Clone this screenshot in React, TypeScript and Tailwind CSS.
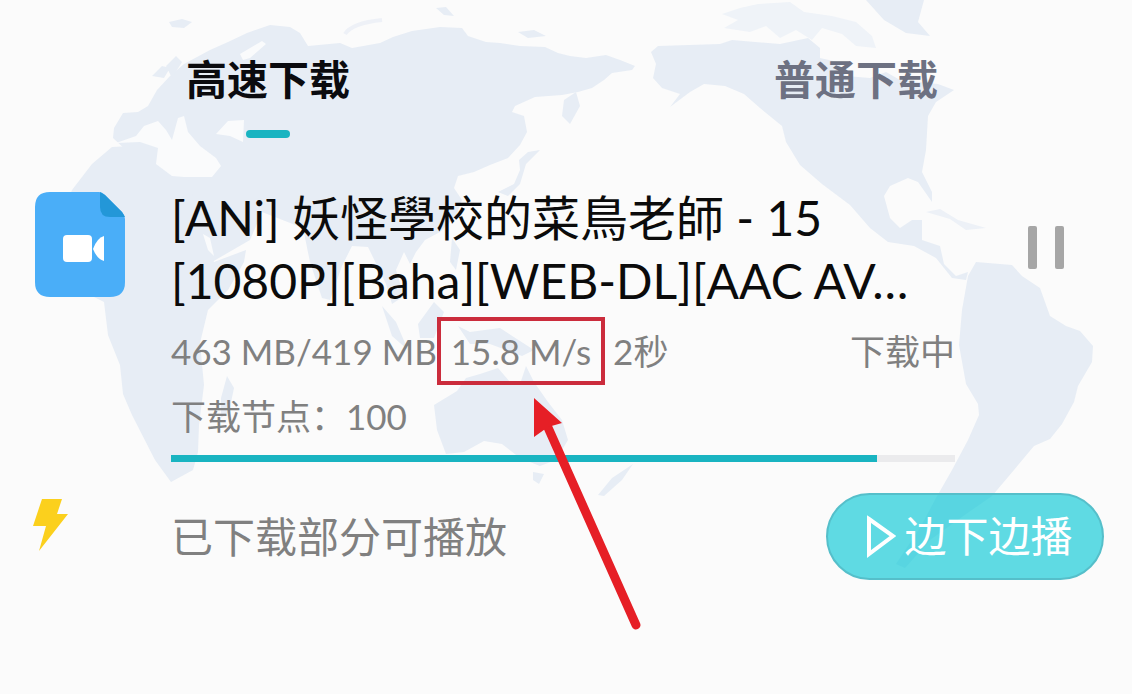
import { useState } from "react";
import clsx from "clsx";

const tabs = ["高速下载", "普通下载"];

const WorldMap: React.FC = () => (
  <svg
    className="absolute inset-x-0 top-0 w-full"
    viewBox="0 0 1132 694"
    fill="#e7edf5"
    aria-hidden="true"
  >
    {/* Eurasia */}
    <path d="M113 138 L114 128 L123 113 L138 112 L148 106 L157 90 L170 76 L184 64 L210 50 L228 42 L247 33 L270 25 L290 27 L300 33 L308 46 L340 43 L352 48 L380 43 L393 37 L412 31 L440 27 L462 28 L468 36 L486 42 L500 43 L520 46 L545 47 L558 53 L570 56 L586 58 L606 55 L620 60 L635 66 L632 70 L612 73 L604 80 L592 88 L578 92 L562 95 L535 97 L515 106 L512 112 L524 116 L527 132 L520 145 L508 158 L490 165 L474 172 L458 176 L454 188 L462 200 L456 216 L440 232 L425 240 L416 252 L410 264 L404 252 L396 270 L404 296 L392 304 L386 284 L368 247 L352 246 L342 266 L330 300 L322 298 L310 262 L303 228 L280 219 L262 212 L250 240 L212 262 L203 242 L180 205 L158 180 Z" />
    {/* British Isles, Iceland, Arctic islands */}
    <path d="M152 76 L162 66 L170 68 L164 78 Z M166 66 L176 56 L182 62 L172 78 Z M169 22 L182 19 L192 22 L184 28 L172 27 Z M436 8 L446 7 L454 16 L444 15 Z M518 32 L534 30 L546 36 L528 38 Z" />
    <path
      d="M345 34 Q352 23 382 20"
      fill="none"
      stroke="#eef1f7"
      strokeWidth="4"
    />
    {/* Africa */}
    <path d="M112 147 L150 145 L188 178 L205 240 L214 262 L246 250 L244 262 L228 290 L208 310 L200 343 L204 385 L199 425 L198 452 L193 470 L171 482 L155 460 L132 415 L123 394 L120 365 L108 335 L104 302 L92 296 L64 284 L50 248 L72 190 L92 164 Z" />
    <path d="M221 398 L227 376 L234 388 L229 412 L221 418 Z" />
    {/* Mediterranean, Black Sea, Baltic, Red Sea */}
    <path
      fill="#fafbfc"
      d="M116 143 L136 136 L144 126 L158 121 L166 130 L172 140 L178 118 L184 116 L188 132 L200 146 L216 158 L221 166 L212 177 L184 177 L172 176 L156 164 L158 148 L140 142 Z M216 134 L228 121 L244 120 L243 142 L230 136 Z M240 54 L262 41 L266 44 L250 58 L243 60 Z M203 234 L210 238 L214 256 L208 250 Z"
    />
    {/* Japan, Kamchatka, South-East Asia */}
    <path d="M564 100 L576 92 L580 106 L570 124 L562 116 Z M498 192 L514 184 L520 170 L519 160 L528 152 L540 150 L526 164 L520 184 L508 196 Z M452 238 L460 250 L456 270 L450 262 Z M382 306 L396 322 L408 350 L392 336 Z M418 324 L434 302 L444 312 L434 338 L420 338 Z M458 326 L470 332 L500 328 L534 350 L522 356 L490 344 L470 344 Z" />
    {/* Australia, New Zealand */}
    <path d="M434 405 L457 391 L466 378 L480 374 L498 368 L510 382 L520 384 L526 366 L534 382 L548 402 L562 420 L568 440 L556 460 L540 466 L520 458 L502 444 L484 441 L464 452 L446 454 L437 430 Z M533 472 L544 474 L539 484 L533 480 Z M598 495 L612 478 L633 464 L622 480 L604 496 Z" />
    {/* North and Central America */}
    <path d="M651 52 L658 46 L720 44 L732 40 L780 44 L808 38 L820 48 L820 58 L838 62 L846 76 L870 78 L886 72 L900 80 L938 84 L954 90 L936 102 L928 116 L926 150 L922 172 L932 192 L932 202 L918 182 L908 178 L890 186 L884 196 L890 218 L900 228 L912 220 L922 220 L922 240 L940 246 L944 264 L956 276 L968 272 L966 280 L952 278 L936 258 L914 246 L888 242 L870 228 L850 205 L822 184 L800 165 L786 142 L782 126 L760 108 L744 94 L725 86 L704 84 L690 92 L670 107 L680 94 L662 88 L653 78 L656 64 Z" />
    <path
      fill="#eff3f8"
      d="M722 14 L740 8 L758 4 L790 2 L804 12 L832 16 L856 22 L872 36 L876 48 L856 46 L842 34 L822 28 L812 40 L796 30 L780 38 L766 26 L750 32 L724 28 L738 20 Z"
    />
    <path d="M866 0 L924 0 L918 22 L930 36 L906 33 L884 20 Z" />
    <path
      fill="#edf1f7"
      d="M926 212 L940 209 L958 220 L986 228 L966 230 L950 219 Z"
    />
    {/* South America */}
    <path d="M968 276 L976 262 L1012 265 L1022 276 L1040 288 L1050 316 L1066 326 L1080 331 L1093 346 L1092 362 L1078 386 L1074 402 L1062 424 L1050 439 L1034 446 L1014 470 L992 496 L966 514 L930 540 L905 568 L896 564 L920 528 L936 498 L952 470 L968 440 L979 415 L978 404 L966 384 L959 345 L962 310 Z" />
  </svg>
);

const VideoFileIcon: React.FC = () => (
  <svg className="w-full" viewBox="0 0 90 105" aria-hidden="true">
    <path
      fill="#4aaef8"
      d="M15 0 H64 Q67 0 70 3 L87 20 Q90 23 90 27 V90 Q90 105 75 105 H15 Q0 105 0 90 V15 Q0 0 15 0 Z"
    />
    <path fill="#2397d8" d="M65 0 L70 3 L87 20 L90 25 H75 Q65 25 65 15 Z" />
    <rect x="28" y="43" width="29" height="27" rx="4" fill="#fff" />
    <path fill="#fff" d="M69 44 V69 Q62 67 58 57 Q62 46 69 44 Z" />
  </svg>
);

const Arrow: React.FC = () => (
  <svg
    className="absolute top-full left-20 h-64 w-32 max-w-none"
    viewBox="0 0 128 256"
    aria-hidden="true"
  >
    <path
      d="M25 42 L115 244"
      stroke="#e61f26"
      strokeWidth="9"
      strokeLinecap="round"
    />
    <path fill="#e61f26" d="M13 17 L41 42 L27 46 L13 56 Z" />
  </svg>
);

const TabBar: React.FC = () => {
  const [active, setActive] = useState(tabs[0]);

  return (
    <div role="tablist" className="flex justify-between pt-12 pr-[194px] pl-[186px]">
      {tabs.map((tab) => (
        <button
          key={tab}
          role="tab"
          aria-selected={tab === active}
          onClick={() => setActive(tab)}
          className={clsx(
            "flex flex-col items-center gap-[18px] text-[41px] leading-[64px] font-bold",
            tab === active ? "text-[#0b0b0f]" : "text-[#6d7182]"
          )}
        >
          {tab}
          <span
            className={clsx(
              "h-2 w-11 rounded-full",
              tab === active && "bg-[#19b4c1]"
            )}
          />
        </button>
      ))}
    </div>
  );
};

const DownloadItem: React.FC = () => {
  const [paused, setPaused] = useState(false);
  const progress = 90;

  return (
    <div className="flex pt-12">
      <div className="mt-1.5 w-[90px] shrink-0">
        <VideoFileIcon />
      </div>

      <div className="ml-[46px] min-w-0 flex-1">
        <h1 className="text-5xl leading-[63px] whitespace-nowrap text-[#0b0b0b]">
          [ANi] 妖怪學校的菜鳥老師 - 15
          <br />
          [1080P][Baha][WEB-DL][AAC AV…
        </h1>

        <div className="mt-[5px] flex h-[68px] items-center text-[35px] whitespace-nowrap text-[#808080]">
          <span>463 MB/419 MB</span>
          <span className="relative flex h-full items-center border-4 border-[#cb2c3c] px-2.5">
            15.8 M/s
            <Arrow />
          </span>
          <span className="ml-2">2秒</span>
          <span className="ml-auto">下载中</span>
        </div>

        <p className="text-[35px] leading-[62px] text-[#808080]">
          下载节点：100
        </p>

        <div
          role="progressbar"
          aria-label="下载中"
          aria-valuenow={progress}
          className="mt-2 h-[7px] bg-[#ebebed]"
        >
          <div
            className="h-full bg-[#19b4c1]"
            style={{ width: `${progress}%` }}
          />
        </div>
      </div>

      <div className="flex w-[149px] shrink-0 justify-end pt-10 pr-10">
        <button
          aria-label={paused ? "继续" : "暂停"}
          onClick={() => setPaused(!paused)}
          className="flex h-[43px] w-9 justify-between"
        >
          <span className="h-full w-[9px] rounded-xs bg-[#a6a6a6]" />
          <span className="h-full w-[9px] rounded-xs bg-[#a6a6a6]" />
        </button>
      </div>
    </div>
  );
};

const PlayBar: React.FC = () => (
  <div className="mt-[31px] flex items-center">
    <div className="w-[90px] shrink-0">
      <svg
        className="-mt-6 -ml-0.5 h-[52px] w-9"
        viewBox="0 0 36 52"
        fill="#fbd01d"
        aria-hidden="true"
      >
        <path d="M9 0 H29 L24 15 H35 L6 52 L13 27 H0 Z" />
      </svg>
    </div>
    <p className="ml-[46px] flex-1 text-[42px] leading-[64px] text-[#808080]">
      已下载部分可播放
    </p>
    <button className="flex h-[87px] w-[278px] shrink-0 items-center justify-center gap-2 rounded-full border-2 border-[#55bfca] bg-[#0bc8d6]/65 pl-2 text-[42px] text-white">
      <svg
        className="h-[43px] w-[31px]"
        viewBox="0 0 31 43"
        fill="none"
        stroke="#fff"
        strokeWidth="4"
        aria-hidden="true"
      >
        <path d="M4 4 L28 21 L4 39 Z" />
      </svg>
      边下边播
    </button>
  </div>
);

const App: React.FC = () => (
  <main className="relative min-h-screen overflow-hidden bg-[#fbfbfb] font-[Lato,'Noto_Sans_CJK_SC',sans-serif]">
    <WorldMap />
    <div className="relative">
      <TabBar />
      <div className="pr-7 pl-[35px]">
        <DownloadItem />
        <PlayBar />
      </div>
    </div>
  </main>
);

export default App;
